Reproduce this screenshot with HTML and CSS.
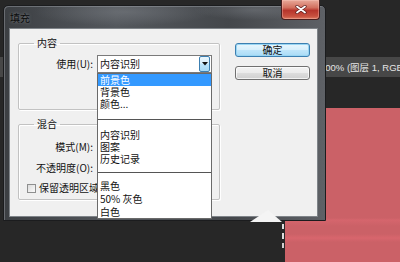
FILE: index.html
```html
<!DOCTYPE html>
<html lang="zh-CN">
<head>
<meta charset="utf-8">
<title>填充</title>
<link rel="stylesheet" href="styles.css">
</head>
<body>
  <div class="workspace">
    <div class="ws-top"></div>
    <div class="statusbar"><span>100% (图层 1, RGB/8)</span></div>
    <div class="ws-gap"></div>
    <div class="canvas"></div>
  </div>

  <div class="dialog">
    <div class="titlebar">
      <span class="title">填充</span>
      <div class="close">
        <svg width="12" height="9" viewBox="0 0 12 9"><path d="M2 1.5 L10 7.5 M10 1.5 L2 7.5" stroke="#5a1b1b" stroke-width="3.2" stroke-linecap="round"/><path d="M2 1.5 L10 7.5 M10 1.5 L2 7.5" stroke="#ffffff" stroke-width="1.8" stroke-linecap="round"/></svg>
      </div>
    </div>
    <div class="client">
      <div class="groups">
        <fieldset class="group group-content">
          <legend>内容</legend>
          <div class="row row-use">
            <span class="label">使用(U):</span>
            <div class="select">
              <span class="select-text">内容识别</span>
              <span class="select-btn"><svg width="6" height="4" viewBox="0 0 6 4"><path d="M0 0 H6 L3 3.5 Z" fill="#111"/></svg></span>
            </div>
          </div>
        </fieldset>
        <fieldset class="group group-blend">
          <legend>混合</legend>
          <div class="row row-mode">
            <span class="label">模式(M):</span>
            <div class="select"></div>
          </div>
          <div class="row row-opacity">
            <span class="label">不透明度(O):</span>
            <div class="input"></div>
          </div>
          <div class="row row-check">
            <span class="checkbox"></span>
            <span class="check-label">保留透明区域</span>
          </div>
        </fieldset>
      </div>
      <div class="buttons">
        <div class="btn btn-default">确定</div>
        <div class="btn">取消</div>
      </div>
    </div>
  </div>

  <div class="dropdown">
    <div class="dd-section dd-first">
      <div class="dd-item selected">前景色</div>
      <div class="dd-item">背景色</div>
      <div class="dd-item">颜色...</div>
    </div>
    <div class="dd-section dd-second">
      <div class="dd-item">内容识别</div>
      <div class="dd-item">图案</div>
      <div class="dd-item">历史记录</div>
    </div>
    <div class="dd-section dd-third">
      <div class="dd-item">黑色</div>
      <div class="dd-item">50% 灰色</div>
      <div class="dd-item">白色</div>
    </div>
  </div>

  <svg class="cursor" width="40" height="53" viewBox="0 0 40 53">
    <polygon points="20,1 2,13 34,13" fill="#f4f4f4"/>
    <rect x="34" y="15" width="2" height="5" fill="#dcdcdc"/>
    <rect x="34" y="24" width="2" height="6" fill="#dcdcdc"/>
    <rect x="34" y="34" width="2" height="5" fill="#cfcfcf"/>
  </svg>
</body>
</html>
```

FILE: styles.css
```css
html, body {
  margin: 0;
  padding: 0;
}

body {
  width: 400px;
  height: 262px;
  position: relative;
  overflow: hidden;
  background: #272727;
  font-family: "Noto Sans CJK SC", "Noto Sans", sans-serif;
  font-size: 10px;
  color: #111;
}

/* ---------- Photoshop workspace behind the dialog ---------- */
.workspace {
  display: flex;
  flex-direction: column;
  height: 262px;
}

.ws-top {
  height: 57px;
}

.statusbar {
  height: 20px;
  background: #474747;
  color: #e4e4e4;
  display: flex;
  align-items: center;
  padding-left: 320px;
  font-family: "Liberation Sans", "Noto Sans CJK SC", sans-serif;
  font-size: 9.5px;
  white-space: nowrap;
  overflow: hidden;
}

.ws-gap {
  height: 31px;
}

.canvas {
  flex: 1;
  margin-left: 285px;
  background:
    linear-gradient(to bottom, rgba(0,0,0,0) 0, rgba(0,0,0,0) 110px, rgba(232,110,120,0.35) 112px, rgba(0,0,0,0) 118px, rgba(0,0,0,0) 126px, rgba(240,110,120,0.35) 130px, rgba(0,0,0,0) 134px),
    #cb6167;
}

/* ---------- Dialog window ---------- */
.dialog {
  position: absolute;
  left: 3px;
  top: 5px;
  width: 323px;
  height: 216px;
  box-sizing: border-box;
  border: 1px solid #1b1c1e;
  border-radius: 5px 5px 0 0;
  padding: 0 7px 3px 5px;
  display: flex;
  flex-direction: column;
  background:
    radial-gradient(ellipse 90px 14px at 120px 6px, rgba(120,124,130,0.55), rgba(120,124,130,0)),
    radial-gradient(ellipse 60px 10px at 250px 4px, rgba(120,124,130,0.5), rgba(120,124,130,0)),
    linear-gradient(to right, #3c3f43 0, #54585d 35%, #44474b 70%, #5e6166 100%);
  box-shadow: inset 1px 1px 0 rgba(160,165,170,0.45);
}

.titlebar {
  height: 22px;
  display: flex;
  align-items: center;
}

.title {
  margin-left: 1px;
  font-size: 10px;
  color: #0a0a0a;
  text-shadow: 0 0 3px rgba(170,175,180,0.6);
}

.close {
  margin-left: auto;
  margin-right: -2px;
  align-self: flex-start;
  margin-top: -6px;
  width: 39px;
  height: 20px;
  box-sizing: border-box;
  border: 1px solid #4a1d1d;
  border-top: none;
  border-radius: 0 0 4px 4px;
  background: linear-gradient(to bottom, #e9a99a 0, #d2705f 40%, #b7352c 55%, #c8503f 85%, #de7a60 100%);
  box-shadow: inset 0 0 0 1px rgba(255,210,200,0.35);
  display: flex;
  align-items: center;
  justify-content: center;
}

.client {
  flex: 1;
  display: flex;
  background: #f0f0f0;
  border: 1px solid #7f8489;
}

/* ---------- Group boxes ---------- */
.groups {
  width: 202px;
  padding: 7px 0 0 8px;
  display: flex;
  flex-direction: column;
  gap: 7px;
}

.group {
  margin: 0;
  padding: 0;
  box-sizing: border-box;
  border: 1px solid #c2c2c2;
  border-radius: 2px;
  box-shadow: inset 1px 1px 0 #ffffff, 1px 1px 0 #ffffff;
  min-width: 0;
}

.group legend {
  margin-left: 15px;
  padding: 0 3px;
  line-height: 14px;
  font-size: 10px;
  color: #111;
}

.group-content {
  height: 74px;
}

.group-blend {
  height: 83px;
}

.row {
  display: flex;
  align-items: center;
  gap: 4px;
}

.label {
  width: 74px;
  text-align: right;
  white-space: nowrap;
  line-height: 12px;
}

.row-use {
  margin-top: 5px;
}

.row-mode {
  margin-top: 7px;
}

.row-opacity {
  margin-top: 3px;
}

.row-check {
  margin-top: 5px;
  gap: 3px;
  padding-left: 8px;
  height: 12px;
  white-space: nowrap;
}

.select {
  width: 115px;
  height: 18px;
  box-sizing: border-box;
  border: 1px solid #7a7a7a;
  background: #ffffff;
  display: flex;
  align-items: center;
  padding-left: 2px;
}

.select-text {
  flex: 1;
  line-height: 12px;
}

.select-btn {
  width: 11px;
  height: 16px;
  box-sizing: border-box;
  border: 1px solid #3c7fb1;
  border-radius: 2px;
  background: linear-gradient(to bottom, #eaf6fd 0, #d9f0fc 45%, #bee6fd 50%, #a7d9f5 100%);
  display: flex;
  align-items: center;
  justify-content: center;
  margin-right: 1px;
}

.input {
  width: 40px;
  height: 18px;
  box-sizing: border-box;
  border: 1px solid #7a7a7a;
  background: #ffffff;
}

.checkbox {
  width: 9px;
  height: 9px;
  box-sizing: border-box;
  border: 1px solid #8e8f8f;
  background: linear-gradient(135deg, #dcdcdc, #fbfbfb);
  flex: none;
}

.check-label {
  line-height: 12px;
}

/* ---------- Buttons ---------- */
.buttons {
  margin-left: 15px;
  padding-top: 14px;
  display: flex;
  flex-direction: column;
  gap: 9px;
}

.btn {
  width: 75px;
  height: 14px;
  box-sizing: border-box;
  border: 1px solid #707070;
  border-radius: 3px;
  background: linear-gradient(to bottom, #f3f3f3 0, #ebebeb 48%, #dddddd 52%, #cfcfcf 100%);
  box-shadow: inset 0 0 0 1px rgba(255,255,255,0.7);
  display: flex;
  align-items: center;
  justify-content: center;
  line-height: 12px;
  font-size: 10px;
}

.btn-default {
  border-color: #3c7fb1;
  background: linear-gradient(to bottom, #e9f6fd 0, #d6effc 48%, #bfe5fa 52%, #a9dbf6 100%);
  box-shadow: inset 0 0 0 1px #9ad6f3;
}

/* ---------- Dropdown list (popup over the dialog) ---------- */
.dropdown {
  position: absolute;
  left: 97px;
  top: 73px;
  width: 115px;
  height: 146px;
  box-sizing: border-box;
  border: 1px solid #6a6a6a;
  background: #ffffff;
  display: flex;
  flex-direction: column;
}

.dd-section + .dd-section {
  border-top: 1px solid #555555;
}

.dd-first {
  padding-bottom: 9px;
}

.dd-second {
  padding-top: 9px;
  padding-bottom: 7px;
}

.dd-third {
  padding-top: 6px;
}

.dd-item {
  height: 12px;
  line-height: 12px;
  padding-left: 2px;
  white-space: nowrap;
  color: #111;
}

.dd-third .dd-item {
  height: 13px;
  line-height: 13px;
}

.dd-item.selected {
  background: #3399ff;
  color: #ffffff;
}

/* ---------- Mouse cursor over the screen ---------- */
.cursor {
  position: absolute;
  left: 248px;
  top: 209px;
}
```
